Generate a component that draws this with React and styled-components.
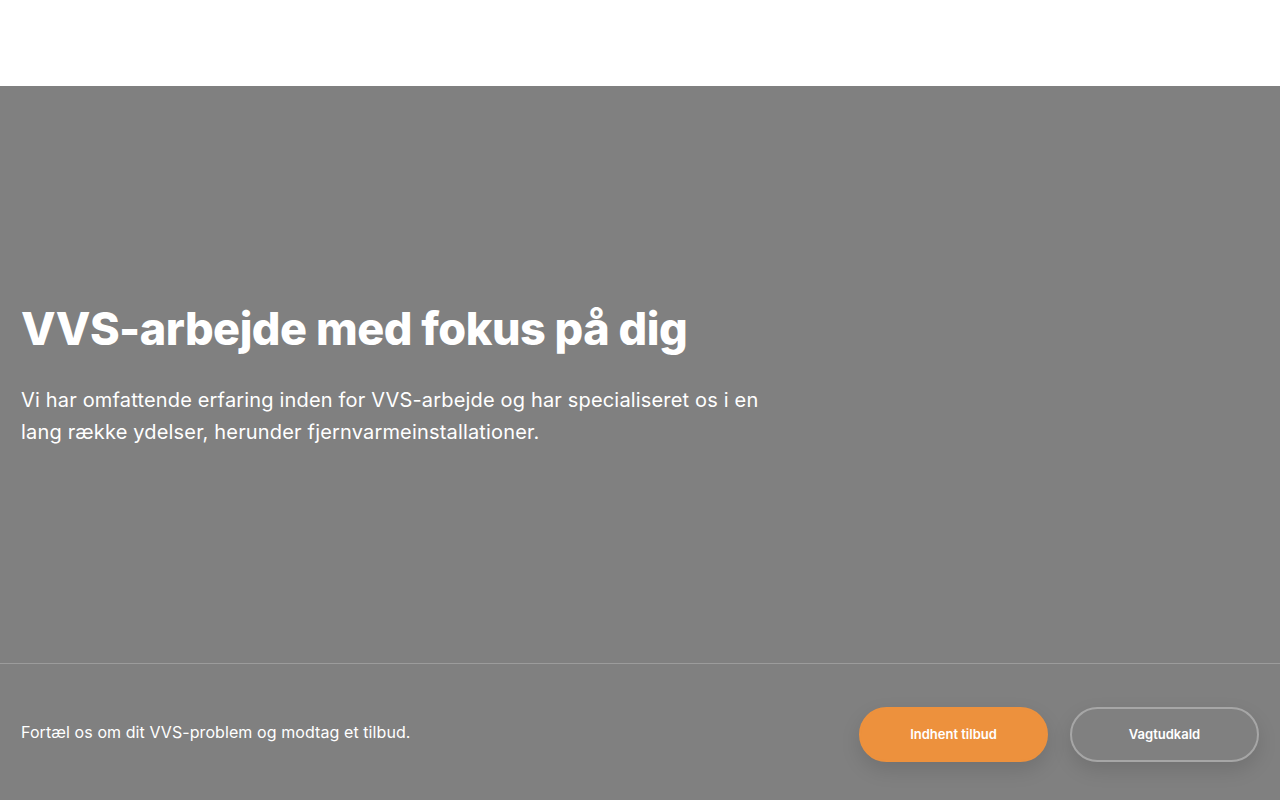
import React from 'react';
import styled, { createGlobalStyle } from 'styled-components';

const GlobalStyle = createGlobalStyle`
  * { box-sizing: border-box; }
  html, body {
    margin: 0;
    padding: 0;
    font-family: 'Inter', 'Noto Sans', sans-serif;
    background: #ffffff;
  }
`;

const Page = styled.div`
  display: flex;
  flex-direction: column;
  height: 800px;
`;

const Header = styled.header`
  height: 86px;
  background: #ffffff;
  flex-shrink: 0;
`;

const Hero = styled.section`
  flex: 1;
  display: flex;
  flex-direction: column;
  background: #808080;
  color: #ffffff;
`;

const HeroBody = styled.div`
  flex: 1;
  display: flex;
  flex-direction: column;
  justify-content: center;
  padding: 0 21px 2px;
`;

const Title = styled.h1`
  margin: 0 0 26px;
  font-size: 45px;
  line-height: 58px;
  font-weight: 800;
  letter-spacing: -0.5px;
`;

const Lead = styled.p`
  margin: 0;
  max-width: 780px;
  font-size: 20px;
  line-height: 32px;
  font-weight: 400;
  letter-spacing: 0.17px;
`;

const ActionBar = styled.div`
  height: 137px;
  border-top: 1px solid rgba(255, 255, 255, 0.22);
  display: flex;
  align-items: center;
  justify-content: space-between;
  padding: 0 21px;
`;

const ActionText = styled.p`
  margin: 0;
  font-size: 16px;
  line-height: 24px;
  letter-spacing: 0.08px;
  color: #ffffff;
`;

const Buttons = styled.div`
  display: flex;
  gap: 22px;
  padding-top: 4px;
`;

const Button = styled.button`
  width: 189px;
  height: 55px;
  border-radius: 999px;
  font-family: 'Inter', 'Noto Sans', sans-serif;
  font-size: 13px;
  font-weight: 600;
  color: #ffffff;
  cursor: pointer;
  box-shadow: 0 8px 20px rgba(0, 0, 0, 0.12);
  background: ${p => (p.$primary ? '#ed913d' : 'transparent')};
  border: 2px solid ${p => (p.$primary ? '#ed913d' : 'rgba(255, 255, 255, 0.3)')};
`;

export default function App() {
  return (
    <>
      <GlobalStyle />
      <Page>
        <Header />
        <Hero>
          <HeroBody>
            <Title>VVS-arbejde med fokus på dig</Title>
            <Lead>
              Vi har omfattende erfaring inden for VVS-arbejde og har specialiseret os i en
              lang række ydelser, herunder fjernvarmeinstallationer.
            </Lead>
          </HeroBody>
          <ActionBar>
            <ActionText>Fortæl os om dit VVS-problem og modtag et tilbud.</ActionText>
            <Buttons>
              <Button $primary>Indhent tilbud</Button>
              <Button>Vagtudkald</Button>
            </Buttons>
          </ActionBar>
        </Hero>
      </Page>
    </>
  );
}
